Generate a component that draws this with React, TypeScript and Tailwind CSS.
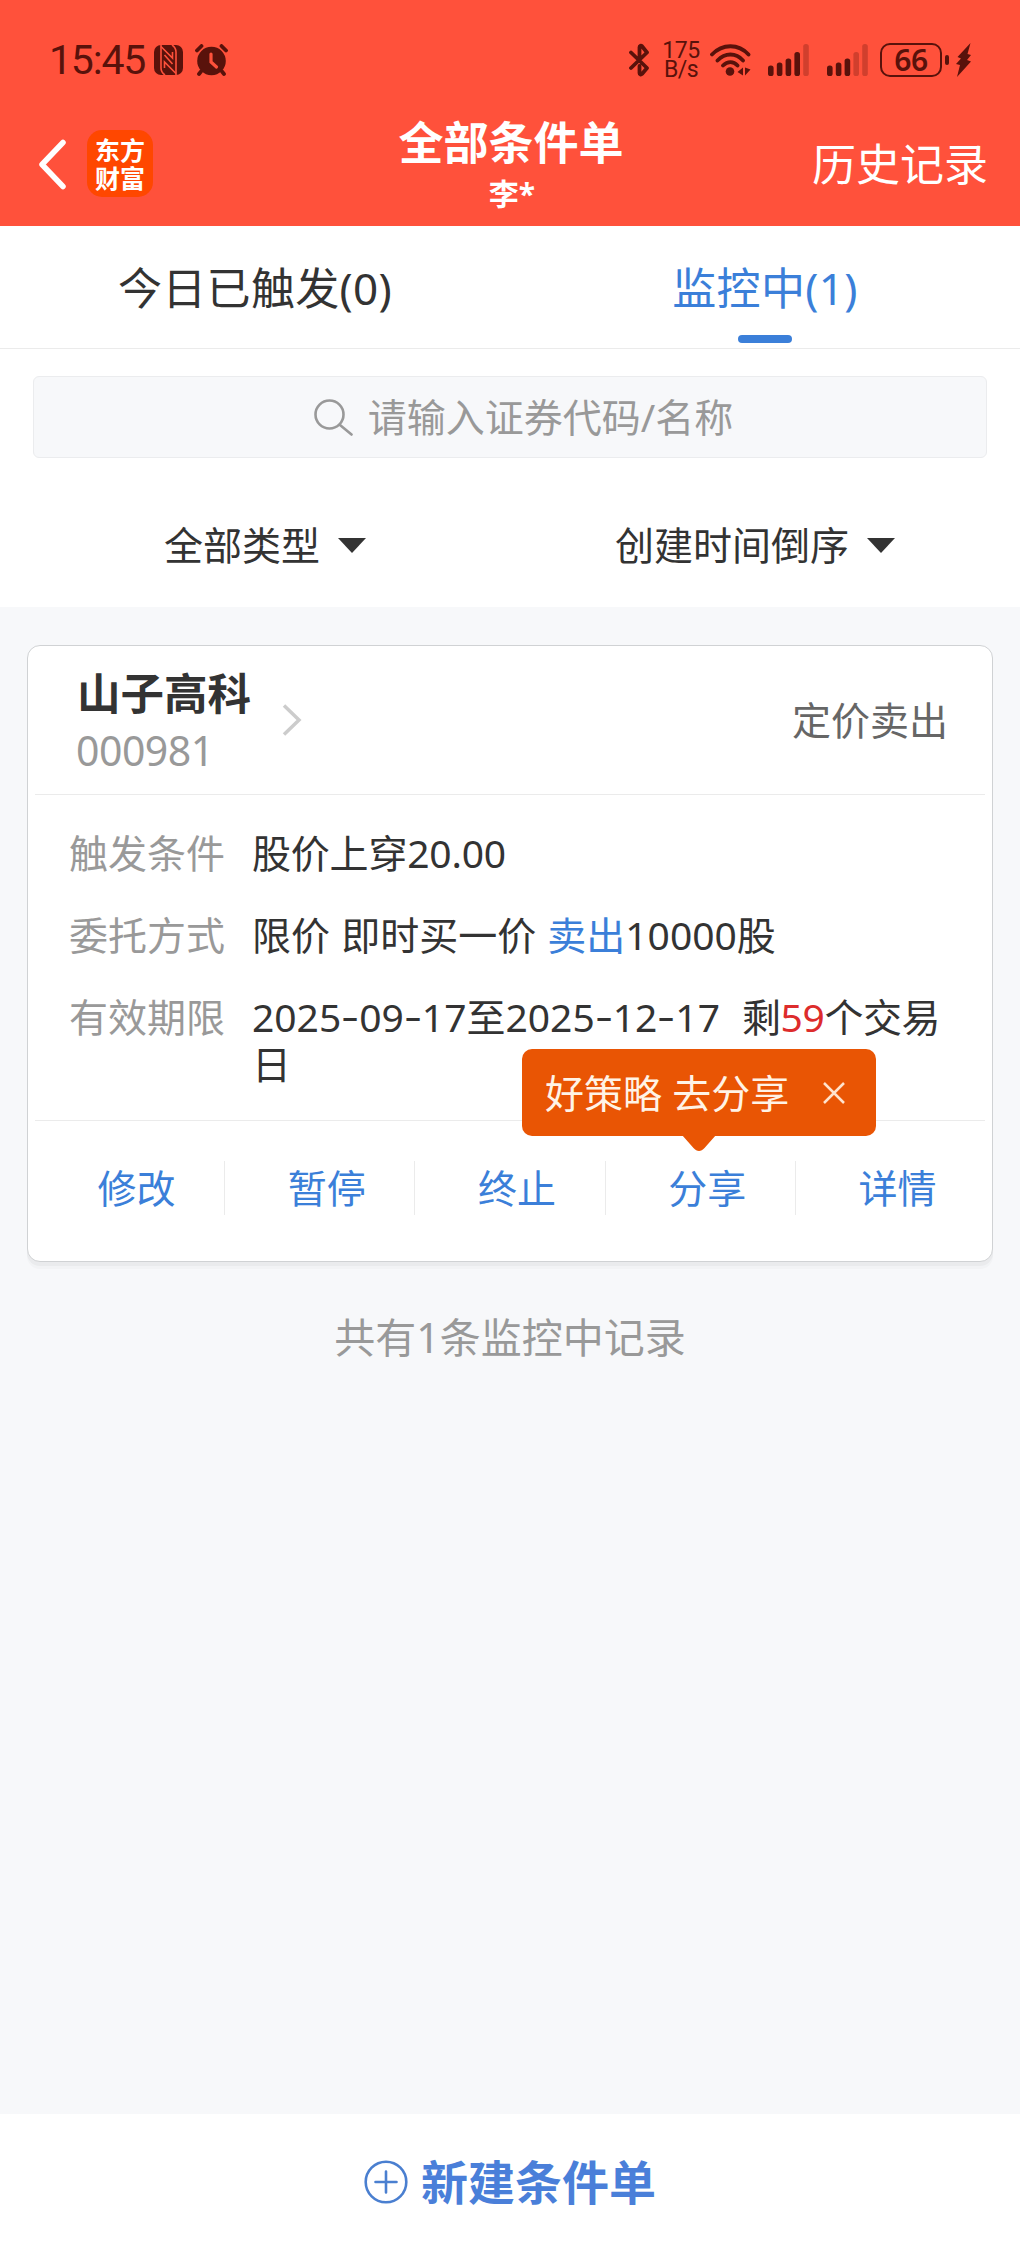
import React, { useState } from 'react';

interface OrderItem {
  id: string;
  name: string;
  code: string;
  type: string;
}

const order: OrderItem = {
  id: 'order-1',
  name: '山子高科',
  code: '000981',
  type: '定价卖出',
};

const actions = ['修改', '暂停', '终止', '分享', '详情'];

const SignalBars: React.FC<{ level: number }> = ({ level }) => {
  const tops = [21.5, 18.5, 14.5, 8, 0];
  return (
    <svg width="41" height="32" viewBox="0 0 41 32" fill="#59120b">
      {tops.map((top, i) => (
        <rect
          key={top}
          x={i * 8.8}
          y={top}
          width="5.6"
          height={32 - top}
          rx="2.6"
          opacity={i < level ? 1 : 0.28}
        />
      ))}
    </svg>
  );
};

const StatusBar: React.FC = () => (
  <div className="flex h-[118px] items-start justify-between pr-[48px] pl-[49px] text-[#59120b]">
    <div className="flex items-center pt-[36px]">
      <span className="w-[105px] font-['Roboto',sans-serif] text-[41px] leading-[48px] font-normal tracking-[-1.2px]">15:45</span>
      <svg width="29" height="30" viewBox="0 0 29 30">
        <rect width="29" height="30" rx="7" fill="#59120b" />
        <path d="M7 0v23c0 3 1 5 4 7M22 30V7c0-3-1-5-4-7" fill="none" stroke="#ff513b" strokeWidth="1.6" />
        <path d="M7 1.5 18.500 13V7M22 28.500 10.500 17v6M10.500 10l8 9" fill="none" stroke="#ff513b" strokeWidth="1.6" />
      </svg>
      <svg className="ml-3" width="33" height="32" viewBox="0 0 33 32">
        <circle cx="16.500" cy="17" r="14.300" fill="#59120b" />
        <path d="M2 6.500 6.500 2M31 6.500 26.500 2M6 27.500l-2 2.500M27 27.500l2 2.500" stroke="#59120b" strokeWidth="3.800" strokeLinecap="round" />
        <path d="M16 10v8l5.500 5" fill="none" stroke="#ff513b" strokeWidth="3.200" strokeLinecap="round" />
      </svg>
    </div>

    <div className="flex items-center pt-[41px]">
      <svg width="20" height="34" viewBox="0 0 20 34" fill="none" stroke="#59120b" strokeWidth="3.800" strokeLinecap="round" strokeLinejoin="round">
        <path d="M2 9.500 18 25l-5 6c-1 1-2.500.7-2.500-1v-7M2 25 18 9.500l-5-6.300c-1-1-2.500-.7-2.500 1V14" />
      </svg>
      <div className="ml-3.5 flex w-[36px] flex-col items-center font-['Roboto',sans-serif] text-[23px] leading-[19px] tracking-[-0.5px]">
        <span>175</span>
        <span>B/s</span>
      </div>
      <svg className="ml-[11px]" width="41" height="32" viewBox="0 0 41 32">
        <path d="M2 10.500c10.500-11 26.500-11 36.500 0M7.500 16.500c7.500-8 18.500-8 25.500 0M13 21.500c4.500-4.500 10.500-4.500 14.500 0" fill="none" stroke="#59120b" strokeWidth="3.800" strokeLinecap="round" />
        <circle cx="20" cy="27.500" r="4.300" fill="#59120b" />
        <path d="m33 23.500-5.500 4.500 5.500 3.500zM35 23.500v8l5.500-6z" fill="#59120b" />
      </svg>
      <span className="ml-[17px]"><SignalBars level={4} /></span>
      <span className="ml-[18px]"><SignalBars level={3} /></span>
      <div className="ml-[12px] flex h-[34px] w-[62px] items-center justify-center rounded-[10px] border-[2.5px] border-[#59120b] font-['Noto_Sans',sans-serif] text-[30px] leading-[30px] font-semibold tracking-[-0.5px]">
        66
      </div>
      <span className="ml-[3px] h-[10px] w-[4px] rounded-full bg-[#59120b]" />
      <svg className="ml-[7px]" width="16" height="34" viewBox="0 0 16 34" fill="#59120b">
        <path d="M14.500 0 1.500 14l3.500 1.500L0 21l4 1L1 34 15 18.500l-4-1.500 4-5-3.500-1z" />
      </svg>
    </div>
  </div>
);

const Header: React.FC = () => (
  <header className="h-[226px] bg-[#ff513b]">
    <StatusBar />
    <div className="grid h-[108px] grid-cols-[1fr_auto_1fr] text-white">
      <div className="flex items-start pt-3 pl-[38px]">
        <svg className="mt-[9px]" width="30" height="51" viewBox="0 0 30 51" fill="none" stroke="white" strokeWidth="5.500" strokeLinecap="round" strokeLinejoin="round">
          <path d="M25 3.500 4 25.500l21 22" />
        </svg>
        <div className="ml-[19px] flex h-[67px] w-[66px] flex-col items-center justify-center rounded-[15px] bg-[#ff4700] pb-[2px] font-['Noto_Sans_CJK_SC',sans-serif] text-[25px] leading-[28px] font-bold">
          <span>东方</span>
          <span>财富</span>
        </div>
      </div>
      <div className="flex flex-col items-center pl-[2px]">
        <h1 className="text-[45px] leading-[50px] font-bold">全部条件单</h1>
        <span className="pt-px pl-[2px] text-[30px] leading-[50px] font-bold">李*</span>
      </div>
      <div className="flex justify-end pt-[20px] pr-[32px]">
        <a href="#" className="text-[44px] leading-[52px]">历史记录</a>
      </div>
    </div>
  </header>
);

const Caret: React.FC = () => (
  <svg className="ml-[18px]" width="28" height="15" viewBox="0 0 28 15" fill="#333">
    <path d="M0 0h28L14 15z" />
  </svg>
);

// Dates use wider dashes than the body font gives
const DateText: React.FC<{ value: string }> = ({ value }) => (
  <>
    {value.split('-').map((part, i) => (
      <React.Fragment key={i}>
        {i > 0 && <span className="inline-block w-[18px] -translate-y-[2px] scale-x-140 text-center">-</span>}
        {part}
      </React.Fragment>
    ))}
  </>
);

const App: React.FC = () => {
  const [activeTab, setActiveTab] = useState(1);
  const [showTip, setShowTip] = useState(true);

  const tabs = ['今日已触发(0)', '监控中(1)'];

  return (
    <div className="flex min-h-[2250px] w-[1020px] flex-col bg-[#f7f8fa] font-['Noto_Sans','Noto_Sans_CJK_SC',sans-serif] text-[#333]">
      <Header />

      <div className="h-[381px] bg-white">
        <nav className="flex h-[123px] border-b border-[#ebebeb]">
          {tabs.map((tab, i) => (
            <button
              key={tab}
              onClick={() => setActiveTab(i)}
              className={`flex flex-1 flex-col items-center pt-[36px] text-[44px] leading-[52px] tracking-[0.3px] ${
                activeTab === i ? 'text-[#3b7fd9]' : 'text-[#333]'
              }`}
            >
              {tab}
              {activeTab === i && <span className="mt-[21px] h-2 w-[54px] rounded-full bg-[#3b7fd9]" />}
            </button>
          ))}
        </nav>

        <div className="mx-[33px] mt-[27px] flex h-[82px] items-center justify-center rounded-md border border-[#ebecee] bg-[#f7f8fa] pl-[27px] text-[#999]">
          <svg width="39" height="38" viewBox="0 0 39 38" fill="none" stroke="#999" strokeWidth="2.600" strokeLinecap="round">
            <circle cx="15.500" cy="16.500" r="14" />
            <path d="m26 27 11.500 9.500" />
          </svg>
          <span className="ml-[15px] text-[39px] leading-[46px]">请输入证券代码/名称</span>
        </div>

        <div className="mt-[62px] flex text-[39px] leading-[50px]">
          <button className="flex w-1/2 items-center justify-center pl-[20px]">
            全部类型
            <Caret />
          </button>
          <button className="flex w-1/2 items-center justify-center pr-[20px]">
            创建时间倒序
            <Caret />
          </button>
        </div>
      </div>

      <main className="px-[27px] pt-[38px]">
        <section className="h-[617px] rounded-[13px] border border-[#d0d2d4] bg-white px-[7px] shadow-[0_4px_0_#eaebed,0_7px_0_#f2f3f5]">
          <div className="flex h-[149px] items-center justify-between border-b border-[#ebebeb] pr-[37px] pl-[42px]">
            <div className="flex items-center">
              <div className="pt-[2px]">
                <div className="text-[43.500px] leading-[56px] font-bold">{order.name}</div>
                <div className="-ml-px pt-px text-[41px] leading-[56px] tracking-[-0.500px] text-[#999]">{order.code}</div>
              </div>
              <svg className="ml-[30px]" width="22" height="34" viewBox="0 0 22 34" fill="none" stroke="#ccc" strokeWidth="3.500">
                <path d="m3 2.500 15 14.500L3 31.500" />
              </svg>
            </div>
            <span className="text-[39px] leading-[46px] text-[#666]">{order.type}</span>
          </div>

          <dl className="grid h-[326px] grid-cols-[183px_1fr] content-start gap-y-[35px] border-b border-[#ebebeb] pt-[34px] pl-[34px] text-[39px] leading-[47px]">
            <dt className="text-[#999]">触发条件</dt>
            <dd className="tracking-[-0.2px]">股价上穿20.00</dd>
            <dt className="text-[#999]">委托方式</dt>
            <dd className="[word-spacing:1px]">
              限价 即时买一价 <span className="text-[#3b7fd9]">卖出</span>10000股
            </dd>
            <dt className="text-[#999]">有效期限</dt>
            <dd>
              <DateText value="2025-09-17" />至<DateText value="2025-12-17" />
              <span className="ml-[22px] tracking-[-0.4px]">
                剩<span className="text-[#dd2c2c]">59</span>个交易
              </span>
              <br />日
            </dd>
          </dl>

          <div className="relative pt-[40px]">
            <div className="flex">
              {actions.map((action) => (
                <button
                  key={action}
                  className="flex h-[54px] flex-1 items-center justify-center border-r border-[#ebebeb] pl-[14px] text-[39px] leading-[46px] text-[#3b7fd9] last:border-r-0"
                >
                  {action}
                </button>
              ))}
            </div>

            {showTip && (
              <div className="absolute top-[-72px] left-[487px] flex h-[87px] w-[354px] items-center rounded-[10px] bg-[#e95504] pl-[23px] text-[39px] leading-[46px] text-[#fff3e6]">
                好策略 去分享
                <button onClick={() => setShowTip(false)} className="ml-[33px]">
                  <svg width="24" height="24" viewBox="0 0 24 24" stroke="#ffe3cd" strokeWidth="2.500">
                    <path d="M2 2l20 20M22 2 2 22" />
                  </svg>
                </button>
                <svg className="absolute top-[86px] left-[160px]" width="34" height="17" viewBox="0 0 34 17" fill="#e95504">
                  <path d="M0 0h34L22.500 13c-3.500 4-7.500 4-11 0z" />
                </svg>
              </div>
            )}
          </div>
        </section>

        <p className="mt-[49px] text-center text-[41px] leading-[52px] text-[#999]">共有1条监控中记录</p>
      </main>

      <footer className="mt-auto flex h-[136px] items-center justify-center bg-white text-[#4a7fd9]">
        <svg width="44" height="44" viewBox="0 0 44 44" fill="none" stroke="#4a7fd0" strokeWidth="2.600" strokeLinecap="round">
          <circle cx="22" cy="22" r="20.300" />
          <path d="M22 11.500v21M11.500 22h21" />
        </svg>
        <span className="ml-[13px] text-[47px] leading-[56px] font-bold">新建条件单</span>
      </footer>
    </div>
  );
};

export default App;
